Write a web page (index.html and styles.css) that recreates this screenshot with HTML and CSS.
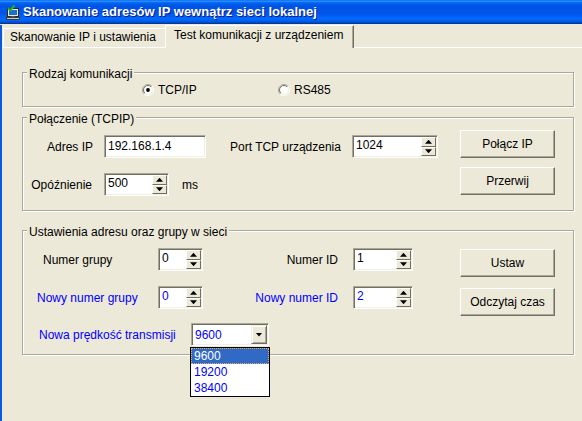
FILE: index.html
```html
<!DOCTYPE html>
<html lang="pl">
<head>
<meta charset="utf-8">
<title>Skanowanie adresów IP</title>
<link rel="stylesheet" href="styles.css">
</head>
<body>
<div class="window">
  <div class="titlebar">
    <svg class="appicon" width="16" height="16" viewBox="0 0 16 16">
      <rect x="2.5" y="4.5" width="11" height="8" fill="#E8E8E8" stroke="#2A2A2A"/>
      <rect x="4" y="6" width="8" height="5" fill="#1E6FC8"/>
      <rect x="6" y="12.5" width="4" height="1.5" fill="#808080"/>
      <rect x="1.5" y="13.5" width="13" height="2" fill="#C8C8C8" stroke="#2A2A2A" stroke-width="0.8"/>
      <polyline points="3,4 5,6.5 9.5,1.5" fill="none" stroke="#22B422" stroke-width="2"/>
    </svg>
    <span class="title">Skanowanie adresów IP wewnątrz sieci lokalnej</span>
  </div>
  <div class="client">
    <div class="tabs">
      <div class="tab tab-inactive">Skanowanie IP i ustawienia</div>
      <div class="tab tab-active">Test komunikacji z urządzeniem</div>
    </div>
    <div class="panel">
      <div class="group g1">
        <div class="legend">Rodzaj komunikacji</div>
        <div class="radios">
          <div class="radio radio-first">
            <svg width="12" height="12" viewBox="0 0 12 12">
              <defs>
                <linearGradient id="ro1" x1="0" y1="0" x2="1" y2="1"><stop offset="0.5" stop-color="#ACA899"/><stop offset="0.5" stop-color="#FFFFFF"/></linearGradient>
                <linearGradient id="ri1" x1="0" y1="0" x2="1" y2="1"><stop offset="0.5" stop-color="#716F64"/><stop offset="0.5" stop-color="#F1EFE2"/></linearGradient>
              </defs>
              <circle cx="6" cy="6" r="5.5" fill="none" stroke="url(#ro1)"/>
              <circle cx="6" cy="6" r="4.5" fill="#fff" stroke="url(#ri1)"/>
              <circle cx="6" cy="6" r="1.9" fill="#000"/>
            </svg>
            <span>TCP/IP</span>
          </div>
          <div class="radio">
            <svg width="12" height="12" viewBox="0 0 12 12">
              <defs>
                <linearGradient id="ro2" x1="0" y1="0" x2="1" y2="1"><stop offset="0.5" stop-color="#ACA899"/><stop offset="0.5" stop-color="#FFFFFF"/></linearGradient>
                <linearGradient id="ri2" x1="0" y1="0" x2="1" y2="1"><stop offset="0.5" stop-color="#716F64"/><stop offset="0.5" stop-color="#F1EFE2"/></linearGradient>
              </defs>
              <circle cx="6" cy="6" r="5.5" fill="none" stroke="url(#ro2)"/>
              <circle cx="6" cy="6" r="4.5" fill="#fff" stroke="url(#ri2)"/>
            </svg>
            <span>RS485</span>
          </div>
        </div>
      </div>

      <div class="group g2">
        <div class="legend">Połączenie (TCPIP)</div>
        <div class="gbody">
          <div class="gleft">
            <div class="row row-a">
              <span class="lbl lbl-right w81">Adres IP</span>
              <div class="edit w-ip"><span class="val">192.168.1.4</span></div>
              <span class="lbl lbl-port">Port TCP urządzenia</span>
              <div class="edit w-port">
                <span class="val">1024</span>
                <span class="spinbtns"><span class="sb up"><i></i></span><span class="sb down"><i></i></span></span>
              </div>
            </div>
            <div class="row row-b">
              <span class="lbl lbl-right w81 pr12">Opóźnienie</span>
              <div class="edit w-delay">
                <span class="val">500</span>
                <span class="spinbtns"><span class="sb up"><i></i></span><span class="sb down"><i></i></span></span>
              </div>
              <span class="lbl lbl-ms">ms</span>
            </div>
          </div>
          <div class="gbuttons gb2">
            <div class="btn">Połącz IP</div>
            <div class="btn">Przerwij</div>
          </div>
        </div>
      </div>

      <div class="group g3">
        <div class="legend">Ustawienia adresu oraz grupy w sieci</div>
        <div class="gbody">
          <div class="gleft">
            <div class="row row-c">
              <span class="lbl w135 pl20">Numer grupy</span>
              <div class="edit w-grp">
                <span class="val">0</span>
                <span class="spinbtns"><span class="sb up"><i></i></span><span class="sb down"><i></i></span></span>
              </div>
              <span class="lbl lbl-right w150">Numer ID</span>
              <div class="edit w-id">
                <span class="val">1</span>
                <span class="spinbtns"><span class="sb up"><i></i></span><span class="sb down"><i></i></span></span>
              </div>
            </div>
            <div class="row row-d">
              <span class="lbl w135 pl14 blue">Nowy numer grupy</span>
              <div class="edit w-grp">
                <span class="val blue">0</span>
                <span class="spinbtns"><span class="sb up"><i></i></span><span class="sb down"><i></i></span></span>
              </div>
              <span class="lbl lbl-right w150 blue">Nowy numer ID</span>
              <div class="edit w-id">
                <span class="val blue">2</span>
                <span class="spinbtns"><span class="sb up"><i></i></span><span class="sb down"><i></i></span></span>
              </div>
            </div>
            <div class="row row-e">
              <span class="lbl w168 pl16 blue">Nowa prędkość transmisji</span>
              <div class="edit combo">
                <span class="val blue">9600</span>
                <span class="cbtn"><i></i></span>
                <div class="dropdown">
                  <div class="opt sel">9600</div>
                  <div class="opt">19200</div>
                  <div class="opt">38400</div>
                </div>
              </div>
            </div>
          </div>
          <div class="gbuttons gb3">
            <div class="btn">Ustaw</div>
            <div class="btn">Odczytaj czas</div>
          </div>
        </div>
      </div>
    </div>
  </div>
</div>
</body>
</html>
```
FILE: styles.css
```css
html, body {
  margin: 0;
  padding: 0;
  background: #ECE9D8;
}

.window {
  width: 582px;
  height: 421px;
  overflow: hidden;
  background: #ECE9D8;
  font-family: "Liberation Sans", Arial, sans-serif;
  font-size: 12px;
  color: #000;
}

/* ---------- title bar ---------- */
.titlebar {
  height: 24px;
  box-sizing: border-box;
  display: flex;
  align-items: center;
  padding-left: 5px;
  background: linear-gradient(to bottom,
    #0058EE 0%, #3593FF 4%, #288EFF 6%, #127DFF 8%, #036FFC 10%,
    #0262EE 14%, #0057E5 20%, #0054E3 24%, #0055EB 56%, #005BF5 66%,
    #026AFE 76%, #0062EF 86%, #0052D6 92%, #0040AB 96%, #003092 100%);
}

.appicon {
  width: 16px;
  height: 16px;
  margin-right: 2px;
  flex: none;
}

.title {
  color: #fff;
  font-weight: bold;
  font-size: 13px;
  line-height: 16px;
  text-shadow: 1px 1px 0 #0A1883;
  white-space: nowrap;
}

/* ---------- client ---------- */
.client {
  height: 397px;
  box-sizing: border-box;
  border-left: 2px solid #0A5AE0;
}

.tabs {
  display: flex;
  align-items: flex-end;
  height: 23px;
  box-sizing: border-box;
  margin-top: 1px;
  border-bottom: 1px solid #fff;
}

.tab {
  box-sizing: border-box;
  background: #ECE9D8;
  border-top: 1px solid #fff;
  border-left: 1px solid #fff;
  white-space: nowrap;
}

.tab-inactive {
  width: 162px;
  height: 19px;
  margin-left: 1px;
  padding-left: 6px;
  line-height: 17px;
}

.tab-active {
  width: 189px;
  height: 23px;
  margin-bottom: -1px;
  padding: 2px 0 0 8px;
  line-height: 14px;
  border-right: 1px solid #716F64;
  box-shadow: inset -1px 0 0 #ACA899;
}

.panel {
  padding: 24px 0 0 20px;
}

/* ---------- group boxes ---------- */
.group {
  width: 552px;
  box-sizing: border-box;
  border: 1px solid #ACA899;
  box-shadow: inset 1px 1px 0 #fff, 1px 1px 0 #fff;
}

.legend {
  width: fit-content;
  margin: -6px 0 -2px 4px;
  padding: 0 2px;
  background: #ECE9D8;
  line-height: 14px;
  white-space: nowrap;
}

.g1 { padding-bottom: 9px; }
.g2 { margin-top: 10px; }
.g3 { margin-top: 19px; }

.radios {
  display: flex;
  align-items: center;
  height: 14px;
  margin-top: 4px;
  padding-left: 119px;
}

.radio {
  display: flex;
  align-items: center;
  gap: 4px;
  line-height: 14px;
}

.radio svg { flex: none; display: block; }

.radio-first { width: 136px; }

.gbody {
  display: flex;
}

.g2 .gbody { padding-bottom: 14px; }
.g3 .gbody { padding-bottom: 8px; }

.gleft { width: 437px; flex: none; }

.row {
  display: flex;
  align-items: center;
  height: 23px;
}

.row-a { margin-top: 11px; }
.row-b { margin-top: 15px; }
.row-c { margin-top: 11px; }
.row-d { margin-top: 15px; }
.row-e { margin-top: 14px; }

.lbl {
  box-sizing: border-box;
  line-height: 14px;
  white-space: nowrap;
  flex: none;
}

.lbl-right { text-align: right; padding-right: 11px; }
.w81 { width: 81px; }
.pr12 { padding-right: 12px; }
.w135 { width: 135px; }
.w150 { width: 150px; padding-right: 15px; }
.w168 { width: 168px; }
.pl20 { padding-left: 20px; }
.pl14 { padding-left: 14px; }
.pl16 { padding-left: 16px; }
.lbl-port { width: 122px; margin-left: 24px; }
.lbl-ms { margin-left: 13px; }

.blue { color: #0000FF; }

/* ---------- edits ---------- */
.edit {
  box-sizing: border-box;
  height: 23px;
  flex: none;
  display: flex;
  background: #fff;
  border: 1px solid;
  border-color: #ACA899 #fff #fff #ACA899;
  box-shadow: inset 1px 1px 0 #716F64, inset -1px -1px 0 #F1EFE2;
}

.val {
  flex: 1;
  padding: 2px 0 0 3px;
  line-height: 14px;
  white-space: nowrap;
}

.w-ip { width: 102px; }
.w-ip .val { padding-top: 3px; }
.w-port { width: 86px; }
.w-delay { width: 65px; }
.w-grp { width: 45px; }
.w-id { width: 60px; }

.spinbtns {
  width: 15px;
  margin: 1px 1px 1px 0;
  display: flex;
  flex-direction: column;
  flex: none;
}

.sb {
  flex: 1;
  box-sizing: border-box;
  background: #ECE9D8;
  border: 1px solid;
  border-color: #fff #716F64 #716F64 #fff;
  display: flex;
  align-items: center;
  justify-content: center;
}

.sb i {
  display: block;
  width: 7px;
  height: 4px;
  background: #000;
}

.sb.up i { clip-path: polygon(50% 0, 100% 100%, 0 100%); }
.sb.down i { clip-path: polygon(0 0, 100% 0, 50% 100%); }

/* ---------- combo ---------- */
.combo {
  width: 78px;
  position: relative;
}

.combo .val { padding-top: 4px; }

.cbtn {
  width: 16px;
  margin: 1px 1px 1px 0;
  box-sizing: border-box;
  background: #ECE9D8;
  border: 1px solid;
  border-color: #F1EFE2 #716F64 #716F64 #F1EFE2;
  box-shadow: inset 1px 1px 0 #fff, inset -1px -1px 0 #ACA899;
  display: flex;
  align-items: center;
  justify-content: center;
  flex: none;
}

.cbtn i {
  display: block;
  width: 7px;
  height: 4px;
  background: #000;
  clip-path: polygon(0 0, 100% 0, 50% 100%);
}

.dropdown {
  position: absolute;
  left: -2px;
  top: calc(100% + 2px);
  width: 80px;
  box-sizing: border-box;
  border: 1px solid #000;
  background: #fff;
  z-index: 2;
}

.opt {
  height: 16px;
  line-height: 16px;
  padding-left: 3px;
  color: #0000FF;
}

.opt.sel {
  background: #316AC5;
  color: #fff;
  outline: 1px dotted #E8B060;
  outline-offset: -1px;
}

/* ---------- buttons ---------- */
.gbuttons {
  display: flex;
  flex-direction: column;
}

.gb2 { margin-top: 6px; gap: 9px; }
.gb3 { margin-top: 12px; gap: 11px; }

.btn {
  width: 95px;
  height: 28px;
  box-sizing: border-box;
  border: 1px solid;
  border-color: #fff #716F64 #716F64 #fff;
  box-shadow: inset -1px -1px 0 #ACA899;
  background: #ECE9D8;
  display: flex;
  align-items: center;
  justify-content: center;
  line-height: 14px;
  white-space: nowrap;
}
```
